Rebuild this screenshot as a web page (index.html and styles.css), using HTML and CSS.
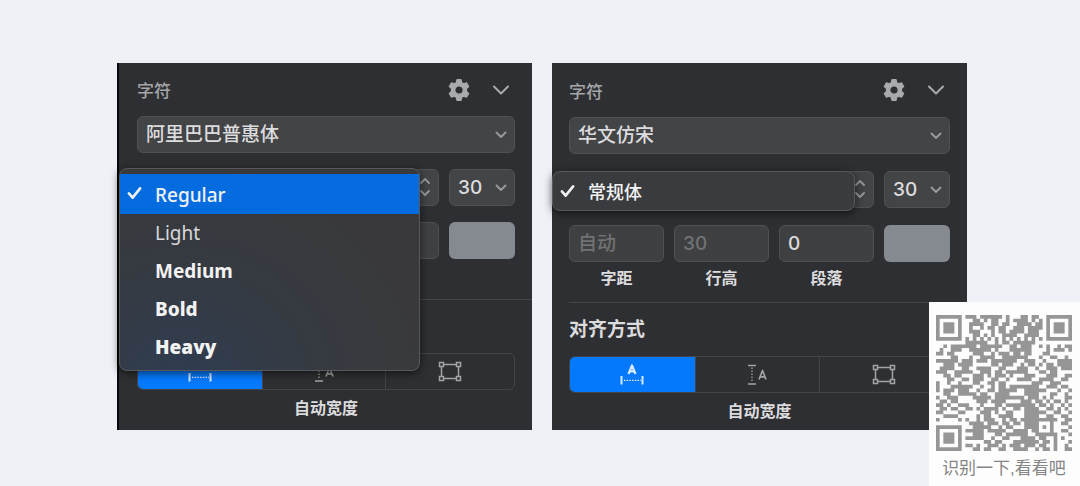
FILE: index.html
```html
<!DOCTYPE html>
<html lang="zh-CN">
<head>
  <meta charset="UTF-8">
  <meta name="viewport" content="width=device-width, initial-scale=1">
  <title>字符面板</title>
  <link rel="stylesheet" href="styles.css">
</head>
<body>

  <svg class="defs" aria-hidden="true">
    <symbol id="gear" viewBox="0 0 24 24">
      <path fill="currentColor" stroke="currentColor" stroke-width="1.4" stroke-linejoin="round" fill-rule="evenodd" d="M10 1.8h4l.7 3 2 1.1 2.9-.9 2 3.5-2.2 2.1v2.8l2.2 2.1-2 3.5-2.9-.9-2 1.1-.7 3h-4l-.7-3-2-1.1-2.9.9-2-3.5 2.2-2.1v-2.8L2.4 8.5l2-3.5 2.9.9 2-1.1zM12 7.7a4.3 4.3 0 1 0 0 8.6 4.3 4.3 0 0 0 0-8.6z"/>
    </symbol>
    <symbol id="chevron" viewBox="0 0 18 10">
      <path fill="none" stroke="currentColor" stroke-width="2" stroke-linecap="round" stroke-linejoin="round" d="M2 1.5l7 7 7-7"/>
    </symbol>
    <symbol id="chevron-small" viewBox="0 0 12 8">
      <path fill="none" stroke="currentColor" stroke-width="2" stroke-linecap="round" stroke-linejoin="round" d="M1.5 1.5L6 6l4.5-4.500"/>
    </symbol>
    <symbol id="stepper" viewBox="0 0 10 18">
      <path fill="none" stroke="currentColor" stroke-width="1.8" stroke-linecap="round" stroke-linejoin="round" d="M1 5l4-4 4 4M1 13l4 4 4-4"/>
    </symbol>
    <symbol id="check" viewBox="0 0 16 14">
      <path fill="none" stroke="currentColor" stroke-width="2.8" stroke-linecap="round" stroke-linejoin="round" d="M2 7.5l4 4.500L14 2"/>
    </symbol>
    <symbol id="auto-width" viewBox="0 0 24 22">
      <path fill="none" stroke="currentColor" stroke-width="2.2" stroke-linejoin="round" d="M8.500 10L12 1.500l3.500 8.500M9.500 7.300h5"/>
      <path fill="none" stroke="currentColor" stroke-width="2" d="M1.500 12v8.500M22.500 12v8.500"/>
      <path fill="none" stroke="currentColor" stroke-width="1.3" stroke-dasharray="1.5 1.2" d="M4 16.300h17"/>
    </symbol>
    <symbol id="auto-height" viewBox="0 0 20 22">
      <path fill="none" stroke="currentColor" stroke-width="1.5" d="M1 1.500h8M1 20h8"/>
      <path fill="none" stroke="currentColor" stroke-width="1.3" stroke-dasharray="1.5 1.5" d="M5 3.500v15"/>
      <path fill="none" stroke="currentColor" stroke-width="1.7" stroke-linejoin="round" d="M12 15.500l3.500-9 3.500 9M13 12.800h5"/>
    </symbol>
    <symbol id="frame" viewBox="0 0 24 22">
      <path fill="none" stroke="currentColor" stroke-width="1.5" d="M5 3.500h14M5 17.500h14M3.500 5v11M20.500 5v11M1.500 1.500h4v4h-4zM18.500 1.500h4v4h-4zM1.500 15.500h4v4h-4zM18.500 15.500h4v4h-4z"/>
    </symbol>
  </svg>

  <main class="panels">
    <section class="panel panel-first">
      <header class="panel-head">
        <h2>字符</h2>
        <button class="icon-btn" aria-label="设置"><svg class="gear"><use href="#gear"/></svg></button>
        <button class="icon-btn" aria-label="收起"><svg class="fold"><use href="#chevron"/></svg></button>
      </header>

      <div class="field">
        <select class="control" aria-label="字体"><option>阿里巴巴普惠体</option></select>
        <svg class="arrow"><use href="#chevron-small"/></svg>
      </div>

      <div class="row">
        <div class="field style-field">
          <select class="control" aria-label="字重"><option></option></select>
          <svg class="steps"><use href="#stepper"/></svg>
        </div>
        <div class="field">
          <select class="control size" aria-label="字号"><option>30</option></select>
          <svg class="arrow"><use href="#chevron-small"/></svg>
        </div>
        <ul class="menu" role="listbox" aria-label="字重">
          <li class="selected" role="option" aria-selected="true"><svg class="check"><use href="#check"/></svg>Regular</li>
          <li class="light" role="option">Light</li>
          <li class="medium" role="option">Medium</li>
          <li class="bold" role="option">Bold</li>
          <li class="heavy" role="option">Heavy</li>
        </ul>
      </div>

      <div class="row">
        <div class="cell"><input class="control" aria-label="字距"></div>
        <div class="cell"><input class="control" aria-label="行高"></div>
        <div class="cell"><input class="control" aria-label="段落"></div>
        <button class="swatch" aria-label="颜色"></button>
      </div>

      <h3 class="section-title"></h3>

      <div class="segments">
        <button class="active" aria-label="自动宽度"><svg><use href="#auto-width"/></svg></button>
        <button aria-label="自动高度"><svg class="narrow"><use href="#auto-height"/></svg></button>
        <button aria-label="固定尺寸"><svg><use href="#frame"/></svg></button>
      </div>
      <p class="caption">自动宽度</p>
    </section>

    <section class="panel">
      <header class="panel-head">
        <h2>字符</h2>
        <button class="icon-btn" aria-label="设置"><svg class="gear"><use href="#gear"/></svg></button>
        <button class="icon-btn" aria-label="收起"><svg class="fold"><use href="#chevron"/></svg></button>
      </header>

      <div class="field">
        <select class="control" aria-label="字体"><option>华文仿宋</option></select>
        <svg class="arrow"><use href="#chevron-small"/></svg>
      </div>

      <div class="row">
        <div class="field style-field">
          <select class="control" aria-label="字重"><option></option></select>
          <svg class="steps"><use href="#stepper"/></svg>
        </div>
        <div class="field">
          <select class="control size" aria-label="字号"><option>30</option></select>
          <svg class="arrow"><use href="#chevron-small"/></svg>
        </div>
        <ul class="menu menu-single" role="listbox" aria-label="字重">
          <li role="option" aria-selected="true"><svg class="check"><use href="#check"/></svg>常规体</li>
        </ul>
      </div>

      <div class="row">
        <div class="cell">
          <input class="control" id="spacing" placeholder="自动">
          <label for="spacing">字距</label>
        </div>
        <div class="cell">
          <input class="control" id="leading" placeholder="30">
          <label for="leading">行高</label>
        </div>
        <div class="cell">
          <input class="control" id="paragraph" value="0">
          <label for="paragraph">段落</label>
        </div>
        <button class="swatch" aria-label="颜色"></button>
      </div>

      <h3 class="section-title">对齐方式</h3>

      <div class="segments">
        <button class="active" aria-label="自动宽度"><svg><use href="#auto-width"/></svg></button>
        <button aria-label="自动高度"><svg class="narrow"><use href="#auto-height"/></svg></button>
        <button aria-label="固定尺寸"><svg><use href="#frame"/></svg></button>
      </div>
      <p class="caption">自动宽度</p>
    </section>
  </main>

  <aside class="qr-card">
    <svg class="qr" viewBox="0 0 37 37" role="img" aria-label="二维码"><path id="qr-path"/></svg>
    <p>识别一下,看看吧</p>
  </aside>

  <script src="qr.js"></script>
</body>
</html>
```
FILE: styles.css
```css
* {
  box-sizing: border-box;
}

body {
  margin: 0;
  background: #eff1f6;
  font-family: "Liberation Sans", "Noto Sans CJK SC", sans-serif;
  color: #dcdcde;
}

h2, h3, p, ul {
  margin: 0;
  padding: 0;
}

button, input, select {
  font: inherit;
  color: inherit;
}

button {
  border: none;
  padding: 0;
  background: none;
}

.defs {
  display: none;
}

.panels {
  display: grid;
  grid-template-columns: 1fr 1fr;
  gap: 20px;
  padding: 63px 113px 56px 117px;
}

/* panel */
.panel {
  --head: 54px;
  --gap: 17px;
  padding: 0 17px;
  background: #2e2f32;
}

.panel-first {
  --head: 53px;
  --gap: 16px;
  padding-left: 18px;
  border-left: 2px solid #08090a;
}

.panel-head {
  display: flex;
  align-items: center;
  height: var(--head);
}

.panel-head h2 {
  flex: 1;
  font-size: 17px;
  font-weight: 500;
  color: #a4a5a8;
}

.icon-btn {
  display: flex;
  color: #a9aaad;
}

.gear {
  width: 24px;
  height: 24px;
  margin-right: 21px;
}

.fold {
  width: 18px;
  height: 10px;
  margin-right: 5px;
}

.field {
  position: relative;
}

.control {
  display: block;
  width: 100%;
  height: 37px;
  padding: 0 8px;
  border: 1px solid #505153;
  border-radius: 6px;
  background: #434446;
  appearance: none;
  font-family: Inter, "Noto Sans CJK SC", sans-serif;
  font-size: 19px;
  font-weight: 500;
  outline: none;
}

input.control {
  background: #3f4042;
}

.control::placeholder {
  color: #717274;
}

.arrow,
.steps {
  position: absolute;
  color: #97989a;
  pointer-events: none;
}

.arrow {
  top: 15px;
  right: 8px;
  width: 12px;
  height: 8px;
}

.steps {
  top: 9px;
  right: 9px;
  width: 10px;
  height: 18px;
}

.row {
  position: relative;
  display: grid;
  grid-template-columns: 1fr 1fr 1fr 66px;
  gap: 10px;
  margin-top: var(--gap);
}

.style-field {
  grid-column: span 3;
}

.cell label {
  display: block;
  height: 34px;
  line-height: 34px;
  text-align: center;
  font-size: 16px;
  font-weight: 700;
}

.swatch {
  height: 37px;
  border-radius: 6px;
  background: #858990;
}

/* popup menu */
.menu {
  position: absolute;
  top: -1px;
  left: -18px;
  z-index: 1;
  width: 301px;
  padding: 5px 0 4px;
  border: 1px solid #57585a;
  border-radius: 8px;
  background: radial-gradient(ellipse at 20% 110%, #2f3d52, #353a41 40%, #39393b 75%);
  box-shadow: 0 2px 8px rgba(0, 0, 0, 0.6);
  list-style: none;
  font-family: "Noto Sans", "Noto Sans CJK SC", sans-serif;
  font-size: 19px;
  color: #f2f2f3;
}

.menu li {
  position: relative;
  height: 38px;
  padding-left: 35px;
  line-height: 38px;
}

.menu .selected {
  height: 40px;
  line-height: 42px;
  background: #056ce0;
  font-weight: 500;
}

.menu .light { font-weight: 400; color: #d8d8da; }
.menu .medium { font-weight: 700; }
.menu .bold { font-weight: 800; }
.menu .heavy { font-weight: 900; }

.menu-single {
  top: 0;
  left: -17px;
  width: 303px;
  padding: 0;
  background: #3a3b3e;
  font-size: 18px;
  font-weight: 500;
}

.menu-single li {
  line-height: 40px;
}

.check {
  position: absolute;
  top: 12px;
  left: 7px;
  width: 15px;
  height: 14px;
}

.section-title {
  height: 54px;
  margin-top: 6px;
  border-top: 1px solid #434447;
  line-height: 54px;
  font-size: 19px;
  font-weight: 700;
}

.panel-first .section-title {
  margin-top: 40px;
  margin-right: -17px;
}

/* alignment buttons */
.segments {
  display: grid;
  grid-template-columns: 125fr 123fr 130fr;
  height: 37px;
  border: 1px solid #434447;
  border-radius: 6px;
  overflow: hidden;
}

.segments button {
  display: flex;
  align-items: center;
  justify-content: center;
  color: #a3a4a7;
}

.segments button + button {
  border-left: 1px solid #434447;
}

.segments .active {
  margin: -1px 0 -1px -1px;
  background: #0579fb;
  color: #d9eaff;
}

.segments svg {
  width: 24px;
  height: 22px;
}

.segments .narrow {
  width: 20px;
}

.caption {
  height: 37px;
  line-height: 37px;
  text-align: center;
  font-size: 16px;
  font-weight: 700;
}

/* QR code in the page corner */
.qr-card {
  position: fixed;
  right: 0;
  bottom: 0;
  z-index: 2;
  padding: 13px 8px 2px 7px;
  background: #fdfdfe;
}

.qr {
  display: block;
  width: 136px;
  height: 136px;
  fill: #969696;
}

.qr-card p {
  height: 33px;
  line-height: 36px;
  text-align: center;
  white-space: nowrap;
  font-size: 17px;
  color: #858585;
}
```
FILE: qr.js
```js
const rows = [
  "1111111011101111110100011011001111111",
  "1000001000110101100101111010101000001",
  "1011101001111001101100111101101011101",
  "1011101001001011011001110111101011101",
  "1011101001110001011011110111001011101",
  "1000001000110101001111001111001000001",
  "1111111010101010101010101010101111111",
  "0000000011111100101101111110000000000",
  "0010111111101111110011011100101001011",
  "0100111001111110100011111100001011101",
  "1101100000111001011101101100011000000",
  "0000110001001111001111111000100110010",
  "1111110111011101111111001110010001111",
  "0011101111000001101110010110101101111",
  "0111100110011110011000111001001110111",
  "1110011111001110110111111000110110000",
  "0011011000111010111010001110001110011",
  "0001100110111001100100111100111100110",
  "1001001000110011011000000011100111000",
  "1000111111001001011011111111001110110",
  "1011101110010011011111001111110001001",
  "0011001111101100111100001111000110010",
  "1001110000111110111111110111010100011",
  "0110110000011101111000011101101011010",
  "1101001110001000110111111110110100101",
  "0110110011010111101001101111001101010",
  "1100001100001110100110001111110011001",
  "0011110000010110011110001111001100110",
  "1000001010010111001011011111111110011",
  "0000000001111011101101101111000100110",
  "1111111000111110010110001111010100001",
  "1000001011111011111001111011000100110",
  "1011101000111000110111111001111110001",
  "1011101011111001001100011110110010100",
  "1011101000000110110001111111011010001",
  "1000001011010011101011101110110010010",
  "1111111000110110011001111001011010011"
];

// one unit square for each dark module
let d = '';
rows.forEach((row, y) => {
  [...row].forEach((bit, x) => {
    if (bit === '1') d += `M${x} ${y}h1v1h-1z`;
  });
});
document.getElementById('qr-path').setAttribute('d', d);
```
